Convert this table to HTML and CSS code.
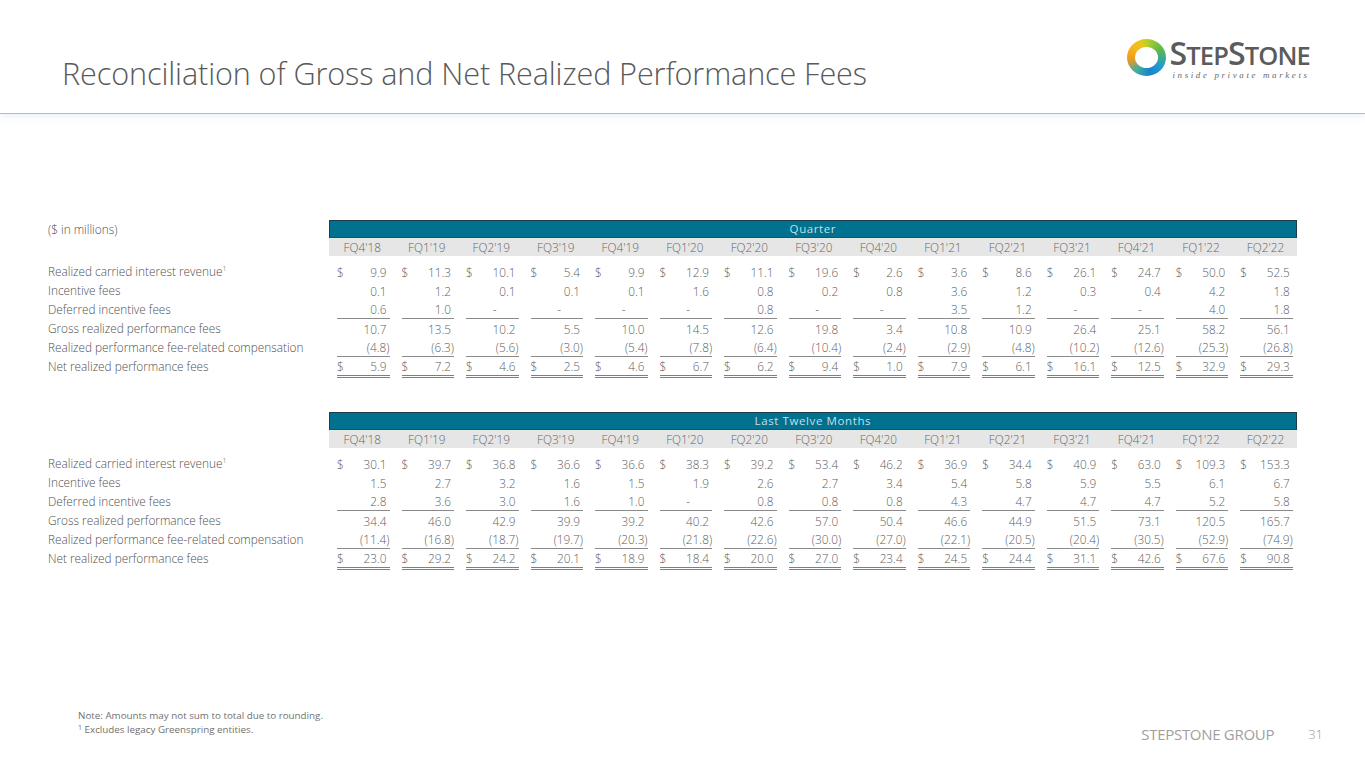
FILE: index.html
```html
<!DOCTYPE html>
<html lang="en">
<head>
<meta charset="utf-8">
<title>Reconciliation of Gross and Net Realized Performance Fees</title>
<link rel="stylesheet" href="styles.css">
</head>
<body>
<div class="page">
  <header class="top">
    <h1 class="title">Reconciliation of Gross and Net Realized Performance Fees</h1>
    <div class="logo">
      <div class="ring"></div>
      <div class="wordmark">
        <div class="brand"><span class="big">S</span>TEP<span class="big">S</span>TONE</div>
        <div class="tag">inside private markets</div>
      </div>
    </div>
  </header>

  <main class="content">
    <section class="tbl">
      <div class="row head">
        <div class="lbl">($ in millions)</div>
        <div class="bar">Quarter</div>
      </div>
      <div class="row sub">
        <div class="lbl"></div>
        <div class="subcells">
          <span>FQ4'18</span><span>FQ1'19</span><span>FQ2'19</span><span>FQ3'19</span><span>FQ4'19</span><span>FQ1'20</span><span>FQ2'20</span><span>FQ3'20</span><span>FQ4'20</span><span>FQ1'21</span><span>FQ2'21</span><span>FQ3'21</span><span>FQ4'21</span><span>FQ1'22</span><span>FQ2'22</span>
        </div>
      </div>
      <div class="body">
        <div class="row">
          <div class="lbl">Realized carried interest revenue<sup>1</sup></div>
          <div class="c"><span class="cur">$</span><span class="v">9.9</span></div>
          <div class="c"><span class="cur">$</span><span class="v">11.3</span></div>
          <div class="c"><span class="cur">$</span><span class="v">10.1</span></div>
          <div class="c"><span class="cur">$</span><span class="v">5.4</span></div>
          <div class="c"><span class="cur">$</span><span class="v">9.9</span></div>
          <div class="c"><span class="cur">$</span><span class="v">12.9</span></div>
          <div class="c"><span class="cur">$</span><span class="v">11.1</span></div>
          <div class="c"><span class="cur">$</span><span class="v">19.6</span></div>
          <div class="c"><span class="cur">$</span><span class="v">2.6</span></div>
          <div class="c"><span class="cur">$</span><span class="v">3.6</span></div>
          <div class="c"><span class="cur">$</span><span class="v">8.6</span></div>
          <div class="c"><span class="cur">$</span><span class="v">26.1</span></div>
          <div class="c"><span class="cur">$</span><span class="v">24.7</span></div>
          <div class="c"><span class="cur">$</span><span class="v">50.0</span></div>
          <div class="c"><span class="cur">$</span><span class="v">52.5</span></div>
        </div>
        <div class="row">
          <div class="lbl">Incentive fees</div>
          <div class="c"><span class="v">0.1</span></div>
          <div class="c"><span class="v">1.2</span></div>
          <div class="c"><span class="v">0.1</span></div>
          <div class="c"><span class="v">0.1</span></div>
          <div class="c"><span class="v">0.1</span></div>
          <div class="c"><span class="v">1.6</span></div>
          <div class="c"><span class="v">0.8</span></div>
          <div class="c"><span class="v">0.2</span></div>
          <div class="c"><span class="v">0.8</span></div>
          <div class="c"><span class="v">3.6</span></div>
          <div class="c"><span class="v">1.2</span></div>
          <div class="c"><span class="v">0.3</span></div>
          <div class="c"><span class="v">0.4</span></div>
          <div class="c"><span class="v">4.2</span></div>
          <div class="c"><span class="v">1.8</span></div>
        </div>
        <div class="row ul">
          <div class="lbl">Deferred incentive fees</div>
          <div class="c"><span class="v">0.6</span></div>
          <div class="c"><span class="v">1.0</span></div>
          <div class="c"><span class="v dash">-</span></div>
          <div class="c"><span class="v dash">-</span></div>
          <div class="c"><span class="v dash">-</span></div>
          <div class="c"><span class="v dash">-</span></div>
          <div class="c"><span class="v">0.8</span></div>
          <div class="c"><span class="v dash">-</span></div>
          <div class="c"><span class="v dash">-</span></div>
          <div class="c"><span class="v">3.5</span></div>
          <div class="c"><span class="v">1.2</span></div>
          <div class="c"><span class="v dash">-</span></div>
          <div class="c"><span class="v dash">-</span></div>
          <div class="c"><span class="v">4.0</span></div>
          <div class="c"><span class="v">1.8</span></div>
        </div>
        <div class="row">
          <div class="lbl">Gross realized performance fees</div>
          <div class="c"><span class="v">10.7</span></div>
          <div class="c"><span class="v">13.5</span></div>
          <div class="c"><span class="v">10.2</span></div>
          <div class="c"><span class="v">5.5</span></div>
          <div class="c"><span class="v">10.0</span></div>
          <div class="c"><span class="v">14.5</span></div>
          <div class="c"><span class="v">12.6</span></div>
          <div class="c"><span class="v">19.8</span></div>
          <div class="c"><span class="v">3.4</span></div>
          <div class="c"><span class="v">10.8</span></div>
          <div class="c"><span class="v">10.9</span></div>
          <div class="c"><span class="v">26.4</span></div>
          <div class="c"><span class="v">25.1</span></div>
          <div class="c"><span class="v">58.2</span></div>
          <div class="c"><span class="v">56.1</span></div>
        </div>
        <div class="row ul">
          <div class="lbl">Realized performance fee-related compensation</div>
          <div class="c"><span class="v neg">(4.8)</span></div>
          <div class="c"><span class="v neg">(6.3)</span></div>
          <div class="c"><span class="v neg">(5.6)</span></div>
          <div class="c"><span class="v neg">(3.0)</span></div>
          <div class="c"><span class="v neg">(5.4)</span></div>
          <div class="c"><span class="v neg">(7.8)</span></div>
          <div class="c"><span class="v neg">(6.4)</span></div>
          <div class="c"><span class="v neg">(10.4)</span></div>
          <div class="c"><span class="v neg">(2.4)</span></div>
          <div class="c"><span class="v neg">(2.9)</span></div>
          <div class="c"><span class="v neg">(4.8)</span></div>
          <div class="c"><span class="v neg">(10.2)</span></div>
          <div class="c"><span class="v neg">(12.6)</span></div>
          <div class="c"><span class="v neg">(25.3)</span></div>
          <div class="c"><span class="v neg">(26.8)</span></div>
        </div>
        <div class="row dul">
          <div class="lbl">Net realized performance fees</div>
          <div class="c"><span class="cur">$</span><span class="v">5.9</span></div>
          <div class="c"><span class="cur">$</span><span class="v">7.2</span></div>
          <div class="c"><span class="cur">$</span><span class="v">4.6</span></div>
          <div class="c"><span class="cur">$</span><span class="v">2.5</span></div>
          <div class="c"><span class="cur">$</span><span class="v">4.6</span></div>
          <div class="c"><span class="cur">$</span><span class="v">6.7</span></div>
          <div class="c"><span class="cur">$</span><span class="v">6.2</span></div>
          <div class="c"><span class="cur">$</span><span class="v">9.4</span></div>
          <div class="c"><span class="cur">$</span><span class="v">1.0</span></div>
          <div class="c"><span class="cur">$</span><span class="v">7.9</span></div>
          <div class="c"><span class="cur">$</span><span class="v">6.1</span></div>
          <div class="c"><span class="cur">$</span><span class="v">16.1</span></div>
          <div class="c"><span class="cur">$</span><span class="v">12.5</span></div>
          <div class="c"><span class="cur">$</span><span class="v">32.9</span></div>
          <div class="c"><span class="cur">$</span><span class="v">29.3</span></div>
        </div>
      </div>
    </section>

    <section class="tbl ltm">
      <div class="row head">
        <div class="lbl"></div>
        <div class="bar">Last Twelve Months</div>
      </div>
      <div class="row sub">
        <div class="lbl"></div>
        <div class="subcells">
          <span>FQ4'18</span><span>FQ1'19</span><span>FQ2'19</span><span>FQ3'19</span><span>FQ4'19</span><span>FQ1'20</span><span>FQ2'20</span><span>FQ3'20</span><span>FQ4'20</span><span>FQ1'21</span><span>FQ2'21</span><span>FQ3'21</span><span>FQ4'21</span><span>FQ1'22</span><span>FQ2'22</span>
        </div>
      </div>
      <div class="body">
        <div class="row">
          <div class="lbl">Realized carried interest revenue<sup>1</sup></div>
          <div class="c"><span class="cur">$</span><span class="v">30.1</span></div>
          <div class="c"><span class="cur">$</span><span class="v">39.7</span></div>
          <div class="c"><span class="cur">$</span><span class="v">36.8</span></div>
          <div class="c"><span class="cur">$</span><span class="v">36.6</span></div>
          <div class="c"><span class="cur">$</span><span class="v">36.6</span></div>
          <div class="c"><span class="cur">$</span><span class="v">38.3</span></div>
          <div class="c"><span class="cur">$</span><span class="v">39.2</span></div>
          <div class="c"><span class="cur">$</span><span class="v">53.4</span></div>
          <div class="c"><span class="cur">$</span><span class="v">46.2</span></div>
          <div class="c"><span class="cur">$</span><span class="v">36.9</span></div>
          <div class="c"><span class="cur">$</span><span class="v">34.4</span></div>
          <div class="c"><span class="cur">$</span><span class="v">40.9</span></div>
          <div class="c"><span class="cur">$</span><span class="v">63.0</span></div>
          <div class="c"><span class="cur">$</span><span class="v">109.3</span></div>
          <div class="c"><span class="cur">$</span><span class="v">153.3</span></div>
        </div>
        <div class="row">
          <div class="lbl">Incentive fees</div>
          <div class="c"><span class="v">1.5</span></div>
          <div class="c"><span class="v">2.7</span></div>
          <div class="c"><span class="v">3.2</span></div>
          <div class="c"><span class="v">1.6</span></div>
          <div class="c"><span class="v">1.5</span></div>
          <div class="c"><span class="v">1.9</span></div>
          <div class="c"><span class="v">2.6</span></div>
          <div class="c"><span class="v">2.7</span></div>
          <div class="c"><span class="v">3.4</span></div>
          <div class="c"><span class="v">5.4</span></div>
          <div class="c"><span class="v">5.8</span></div>
          <div class="c"><span class="v">5.9</span></div>
          <div class="c"><span class="v">5.5</span></div>
          <div class="c"><span class="v">6.1</span></div>
          <div class="c"><span class="v">6.7</span></div>
        </div>
        <div class="row ul">
          <div class="lbl">Deferred incentive fees</div>
          <div class="c"><span class="v">2.8</span></div>
          <div class="c"><span class="v">3.6</span></div>
          <div class="c"><span class="v">3.0</span></div>
          <div class="c"><span class="v">1.6</span></div>
          <div class="c"><span class="v">1.0</span></div>
          <div class="c"><span class="v dash">-</span></div>
          <div class="c"><span class="v">0.8</span></div>
          <div class="c"><span class="v">0.8</span></div>
          <div class="c"><span class="v">0.8</span></div>
          <div class="c"><span class="v">4.3</span></div>
          <div class="c"><span class="v">4.7</span></div>
          <div class="c"><span class="v">4.7</span></div>
          <div class="c"><span class="v">4.7</span></div>
          <div class="c"><span class="v">5.2</span></div>
          <div class="c"><span class="v">5.8</span></div>
        </div>
        <div class="row">
          <div class="lbl">Gross realized performance fees</div>
          <div class="c"><span class="v">34.4</span></div>
          <div class="c"><span class="v">46.0</span></div>
          <div class="c"><span class="v">42.9</span></div>
          <div class="c"><span class="v">39.9</span></div>
          <div class="c"><span class="v">39.2</span></div>
          <div class="c"><span class="v">40.2</span></div>
          <div class="c"><span class="v">42.6</span></div>
          <div class="c"><span class="v">57.0</span></div>
          <div class="c"><span class="v">50.4</span></div>
          <div class="c"><span class="v">46.6</span></div>
          <div class="c"><span class="v">44.9</span></div>
          <div class="c"><span class="v">51.5</span></div>
          <div class="c"><span class="v">73.1</span></div>
          <div class="c"><span class="v">120.5</span></div>
          <div class="c"><span class="v">165.7</span></div>
        </div>
        <div class="row ul">
          <div class="lbl">Realized performance fee-related compensation</div>
          <div class="c"><span class="v neg">(11.4)</span></div>
          <div class="c"><span class="v neg">(16.8)</span></div>
          <div class="c"><span class="v neg">(18.7)</span></div>
          <div class="c"><span class="v neg">(19.7)</span></div>
          <div class="c"><span class="v neg">(20.3)</span></div>
          <div class="c"><span class="v neg">(21.8)</span></div>
          <div class="c"><span class="v neg">(22.6)</span></div>
          <div class="c"><span class="v neg">(30.0)</span></div>
          <div class="c"><span class="v neg">(27.0)</span></div>
          <div class="c"><span class="v neg">(22.1)</span></div>
          <div class="c"><span class="v neg">(20.5)</span></div>
          <div class="c"><span class="v neg">(20.4)</span></div>
          <div class="c"><span class="v neg">(30.5)</span></div>
          <div class="c"><span class="v neg">(52.9)</span></div>
          <div class="c"><span class="v neg">(74.9)</span></div>
        </div>
        <div class="row dul">
          <div class="lbl">Net realized performance fees</div>
          <div class="c"><span class="cur">$</span><span class="v">23.0</span></div>
          <div class="c"><span class="cur">$</span><span class="v">29.2</span></div>
          <div class="c"><span class="cur">$</span><span class="v">24.2</span></div>
          <div class="c"><span class="cur">$</span><span class="v">20.1</span></div>
          <div class="c"><span class="cur">$</span><span class="v">18.9</span></div>
          <div class="c"><span class="cur">$</span><span class="v">18.4</span></div>
          <div class="c"><span class="cur">$</span><span class="v">20.0</span></div>
          <div class="c"><span class="cur">$</span><span class="v">27.0</span></div>
          <div class="c"><span class="cur">$</span><span class="v">23.4</span></div>
          <div class="c"><span class="cur">$</span><span class="v">24.5</span></div>
          <div class="c"><span class="cur">$</span><span class="v">24.4</span></div>
          <div class="c"><span class="cur">$</span><span class="v">31.1</span></div>
          <div class="c"><span class="cur">$</span><span class="v">42.6</span></div>
          <div class="c"><span class="cur">$</span><span class="v">67.6</span></div>
          <div class="c"><span class="cur">$</span><span class="v">90.8</span></div>
        </div>
      </div>
    </section>
  </main>

  <footer class="foot">
    <div class="notes">
      <div>Note: Amounts may not sum to total due to rounding.</div>
      <div><sup>1</sup> Excludes legacy Greenspring entities.</div>
    </div>
    <div class="group">STEPSTONE GROUP</div>
    <div class="pnum">31</div>
  </footer>
</div>
</body>
</html>
```

FILE: styles.css
```css
* { box-sizing: border-box; }
html, body { margin: 0; padding: 0; background: #ffffff; }
body {
  font-family: "Open Sans", "Liberation Sans", sans-serif;
  color: #5f5f5f;
}
.page {
  width: 1365px;
  height: 768px;
  display: flex;
  flex-direction: column;
  overflow: hidden;
}

/* header */
.top {
  height: 114px;
  flex: none;
  display: flex;
  align-items: flex-start;
  justify-content: space-between;
  padding: 0 55px 0 62px;
  border-bottom: 1px solid #a9bccb;
  box-shadow: 0 3px 6px rgba(180, 205, 225, 0.25);
}
.title {
  margin: 52px 0 0 0;
  font-size: 30.6px;
  font-weight: 300;
  line-height: 42px;
  color: #595959;
  letter-spacing: -0.1px;
}
.logo {
  margin-top: 38px;
  display: flex;
  align-items: flex-start;
}
.ring {
  width: 39px;
  height: 37px;
  margin: 1px 3px 0 0;
  border-radius: 50%;
  background: conic-gradient(from 0deg, #b9d12a 0deg, #5db84a 60deg, #1f9ad6 125deg, #1b84c6 170deg, #3aaea3 215deg, #f19a1f 265deg, #f5b91a 310deg, #e8c61c 340deg, #b9d12a 360deg);
  position: relative;
}
.ring::after {
  content: "";
  position: absolute;
  left: 8px;
  top: 8px;
  width: 23px;
  height: 21px;
  border-radius: 50%;
  background: #ffffff;
}
.wordmark { display: flex; flex-direction: column; }
.brand {
  font-family: "Open Sans", "Liberation Sans", sans-serif;
  font-weight: 600;
  font-size: 25.5px;
  line-height: 30px;
  color: #5b5b5b;
  letter-spacing: -0.85px;
}
.brand .big { font-size: 32px; }
.tag {
  font-family: "Liberation Serif", serif;
  font-style: italic;
  font-size: 9px;
  line-height: 10px;
  letter-spacing: 2.6px;
  color: #6a6a6a;
  margin: 0 0 0 3px;
}

/* tables */
.content {
  flex: none;
  padding: 106px 0 0 48px;
}
.tbl + .tbl { margin-top: 36px; }
.row {
  display: grid;
  grid-template-columns: 281px repeat(15, 64.53px);
  font-size: 11.8px;
  font-weight: 300;
}
.lbl {
  white-space: nowrap;
  color: #4f4f4f;
  line-height: 19px;
}
.lbl sup { font-size: 7px; line-height: 0; vertical-align: 5px; }
.head { height: 18px; }
.head .lbl { line-height: 18px; }
.bar {
  grid-column: 2 / -1;
  background: #00718f;
  border: 1px solid #1d3d4a;
  border-bottom-color: #0d5a70;
  color: #c9dfe6;
  text-align: center;
  font-size: 11.5px;
  font-weight: 400;
  letter-spacing: 0.6px;
  line-height: 16px;
}
.sub { height: 18px; }
.subcells {
  grid-column: 2 / -1;
  display: grid;
  grid-template-columns: repeat(15, 1fr);
  background: #e6e6e6;
  color: #666666;
  font-size: 11.8px;
  line-height: 18px;
  text-align: center;
}
.subcells span { padding-left: 2px; }
.body { padding-top: 6px; }
.body .row { height: 19px; }
.c {
  margin: 0 4px 0 8px;
  display: flex;
  justify-content: flex-end;
  align-items: center;
  color: #606060;
  line-height: 18px;
  white-space: nowrap;
}
.c .cur { margin-right: auto; }
.c .v { padding-right: 3px; }
.c .v.neg { padding-right: 0; }
.c .v.dash { padding-right: 22px; }
.ul .c { border-bottom: 1px solid #8a8a8a; }
.dul .c { border-bottom: 3px double #7f7f7f; }

/* footer */
.foot {
  margin-top: auto;
  display: flex;
  align-items: flex-end;
  padding: 0 42px 31px 78px;
  color: #707070;
}
.notes {
  font-size: 9.8px;
  line-height: 14px;
  font-weight: 400;
  flex: 1;
}
.notes sup { font-size: 7px; vertical-align: 3px; line-height: 0; }
.group {
  font-size: 15px;
  font-weight: 400;
  color: #a0a0a0;
  line-height: 18px;
  margin-bottom: -6px;
  letter-spacing: -0.3px;
}
.pnum {
  margin-left: 34px;
  font-size: 13px;
  font-weight: 300;
  color: #9a9a9a;
  line-height: 18px;
  margin-bottom: -6px;
}
```
